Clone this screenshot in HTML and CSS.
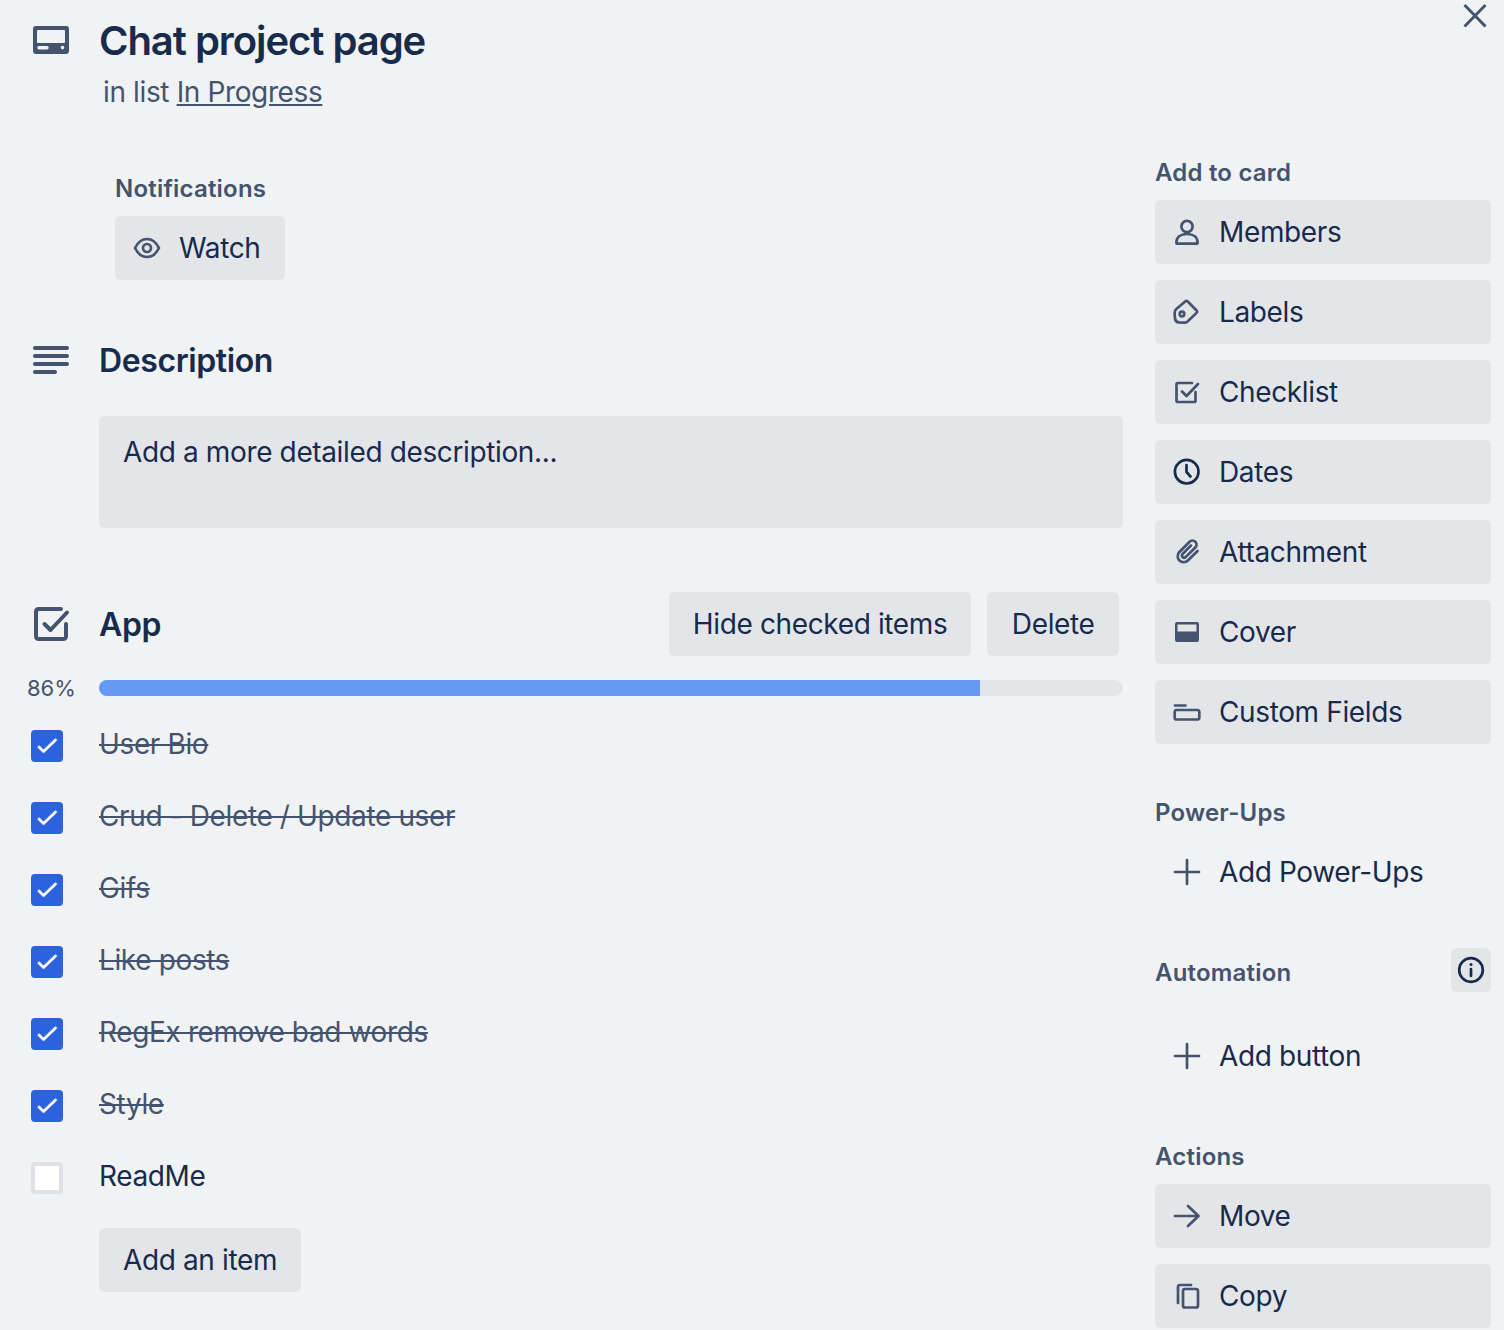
FILE: index.html
```html
<!DOCTYPE html>
<html lang="en">
<head>
    <meta charset="UTF-8">
    <meta name="viewport" content="width=device-width, initial-scale=1.0">
    <title>Chat project page</title>
    <link rel="stylesheet" href="styles.css">
</head>
<body>
    <div class="card-window">
        <svg class="close-icon" viewBox="0 0 32 32"><path d="M5.5 5 26.5 26.5M26.5 5 5.5 26.5"/></svg>

        <div class="card-main">
            <div class="card-head">
                <div class="gutter">
                    <svg class="cover-big" viewBox="0 0 36 28"><path fill-rule="evenodd" d="M3 0h30a3 3 0 0 1 3 3v22a3 3 0 0 1-3 3H3a3 3 0 0 1-3-3V3a3 3 0 0 1 3-3zM5 4a1 1 0 0 0-1 1v11a1 1 0 0 0 1 1h26a1 1 0 0 0 1-1V5a1 1 0 0 0-1-1zM6 20a1.7 1.7 0 0 0 0 3.4h8a1.7 1.7 0 0 0 0-3.4zM29.5 19.8a1.8 1.8 0 1 0 0 3.6 1.8 1.8 0 0 0 0-3.6z"/></svg>
                </div>
                <h1>Chat project page</h1>
            </div>
            <p class="in-list">in list <a href="#">In Progress</a></p>

            <div class="notifications">
                <h3 class="label">Notifications</h3>
                <button class="btn btn-icon">
                    <svg class="icon" viewBox="0 0 32 32"><path d="M4 16c2.5-5 7-9 12-9s9.5 4 12 9c-2.5 5-7 9-12 9s-9.5-4-12-9z"/><circle cx="16" cy="16" r="4"/></svg>
                    Watch
                </button>
            </div>

            <div class="section-head desc-head">
                <div class="gutter">
                    <svg class="lines-icon" viewBox="0 0 36 28"><rect width="36" height="4" rx="2"/><rect y="8" width="36" height="4" rx="2"/><rect y="16" width="36" height="4" rx="2"/><rect y="24" width="24" height="4" rx="2"/></svg>
                </div>
                <h2>Description</h2>
            </div>
            <div class="desc-box">Add a more detailed description...</div>

            <div class="section-head checklist-head">
                <div class="gutter">
                    <svg class="app-check" viewBox="0 0 36 34"><path d="M27 2H4.5A2.5 2.5 0 0 0 2 4.5v25A2.5 2.5 0 0 0 4.5 32h25a2.5 2.5 0 0 0 2.5-2.5V17M10.5 17l6 6L33 5.5"/></svg>
                </div>
                <h2>App</h2>
                <div class="head-actions">
                    <button class="btn">Hide checked items</button>
                    <button class="btn">Delete</button>
                </div>
            </div>

            <div class="progress-row">
                <span class="percent">86%</span>
                <div class="progress"><div class="progress-fill" style="width: 86%"></div></div>
            </div>

            <ul class="items">
                <li class="item done"><span class="box"><svg viewBox="0 0 32 32"><path d="M8 17l4.5 4.5L24.5 10"/></svg></span><span class="item-text">User Bio</span></li>
                <li class="item done"><span class="box"><svg viewBox="0 0 32 32"><path d="M8 17l4.5 4.5L24.5 10"/></svg></span><span class="item-text">Crud - Delete / Update user</span></li>
                <li class="item done"><span class="box"><svg viewBox="0 0 32 32"><path d="M8 17l4.5 4.5L24.5 10"/></svg></span><span class="item-text">Gifs</span></li>
                <li class="item done"><span class="box"><svg viewBox="0 0 32 32"><path d="M8 17l4.5 4.5L24.5 10"/></svg></span><span class="item-text">Like posts</span></li>
                <li class="item done"><span class="box"><svg viewBox="0 0 32 32"><path d="M8 17l4.5 4.5L24.5 10"/></svg></span><span class="item-text">RegEx remove bad words</span></li>
                <li class="item done"><span class="box"><svg viewBox="0 0 32 32"><path d="M8 17l4.5 4.5L24.5 10"/></svg></span><span class="item-text">Style</span></li>
                <li class="item"><span class="box"></span><span class="item-text">ReadMe</span></li>
            </ul>
            <button class="btn add-item">Add an item</button>
        </div>

        <aside class="card-side">
            <h3 class="label side-label">Add to card</h3>
            <div class="side-list">
                <button class="btn btn-icon side-btn">
                    <svg class="icon" viewBox="0 0 32 32"><circle cx="16" cy="10.5" r="5.6"/><path d="M5.4 26.4c0-5 4-8.4 10.6-8.4s10.6 3.4 10.6 8.4c0 .8-.5 1.3-1.3 1.3H6.700c-.8 0-1.300-.5-1.300-1.300z"/></svg>
                    Members
                </button>
                <button class="btn btn-icon side-btn">
                    <svg class="icon" viewBox="0 0 32 32"><path d="M14.5 5.2q1-.7 2 .1l9.300 9.500q.8.900 0 1.800L16 26q-1 .8-2.500.7L8 26.500q-3.500-.3-4-4L3.600 17q0-2.500 1.700-4z"/><circle cx="11" cy="18" r="2.300"/></svg>
                    Labels
                </button>
                <button class="btn btn-icon side-btn">
                    <svg class="icon" viewBox="0 0 32 32"><path d="M21 7H7a1.5 1.5 0 0 0-1.5 1.5v16A1.5 1.5 0 0 0 7 26h16a1.5 1.5 0 0 0 1.5-1.5V16M11 15.5l4.5 4.5L27 8"/></svg>
                    Checklist
                </button>
                <button class="btn btn-icon side-btn">
                    <svg class="icon icon-dark" viewBox="0 0 32 32"><circle cx="15.7" cy="15.7" r="11.8"/><path d="M15.5 9v7l4 4.5"/></svg>
                    Dates
                </button>
                <button class="btn btn-icon side-btn">
                    <svg class="icon" viewBox="0 0 32 32"><path d="M20 9.500 11.500 18a2.200 2.200 0 0 0 3.100 3.100l9.700-9.600a4 4 0 0 0-5.700-5.700L8.400 16a6 6 0 0 0 8.500 8.500L26.500 15"/></svg>
                    Attachment
                </button>
                <button class="btn btn-icon side-btn">
                    <svg class="icon icon-fill" viewBox="0 0 32 32"><path fill-rule="evenodd" d="M6 6h20a2 2 0 0 1 2 2v16a2 2 0 0 1-2 2H6a2 2 0 0 1-2-2V8a2 2 0 0 1 2-2zM7 8.5a.5.5 0 0 0-.5.5v6.500h19V9a.5.5 0 0 0-.5-.5z"/></svg>
                    Cover
                </button>
                <button class="btn btn-icon side-btn">
                    <svg class="icon" viewBox="0 0 32 32"><path d="M4 9.500h10.500"/><rect x="3.700" y="14" width="24.600" height="9.500" rx="2"/></svg>
                    Custom Fields
                </button>
            </div>

            <h3 class="label side-label side-gap">Power-Ups</h3>
            <button class="btn btn-icon side-btn btn-plain">
                <svg class="icon" viewBox="0 0 32 32"><path d="M16 4v24M4 16h24"/></svg>
                Add Power-Ups
            </button>

            <div class="automation-head">
                <h3 class="label">Automation</h3>
                <button class="info-btn">
                    <svg class="icon icon-dark" viewBox="0 0 32 32"><circle cx="16" cy="16" r="11.8"/><path d="M16 15v7"/><circle class="dot" cx="16" cy="10.5" r="1.5"/></svg>
                </button>
            </div>
            <button class="btn btn-icon side-btn btn-plain">
                <svg class="icon" viewBox="0 0 32 32"><path d="M16 4v24M4 16h24"/></svg>
                Add button
            </button>

            <h3 class="label side-label side-gap">Actions</h3>
            <div class="side-list">
                <button class="btn btn-icon side-btn">
                    <svg class="icon" viewBox="0 0 32 32"><path d="M4 16h23M17 6l10.500 10L17 26"/></svg>
                    Move
                </button>
                <button class="btn btn-icon side-btn">
                    <svg class="icon" viewBox="0 0 32 32"><path d="M7 23V7a2 2 0 0 1 2-2h11"/><rect x="12" y="9" width="15" height="18.500" rx="2"/></svg>
                    Copy
                </button>
            </div>
        </aside>
    </div>
</body>
</html>
```
FILE: styles.css
```css
* {
    box-sizing: border-box;
}
body {
    font-family: Inter, "Liberation Sans", sans-serif;
    font-size: 28px;
    line-height: 40px;
    letter-spacing: -0.37px;
    color: #172b4d;
    background-color: #f1f2f4;
    margin: 0;
    height: 1330px;
    overflow: hidden;
}
h1, h2, h3, p, ul {
    margin: 0;
    padding: 0;
}
svg {
    display: block;
}
.card-window {
    position: relative;
    display: flex;
    gap: 32px;
    padding-right: 13px;
}
.close-icon {
    position: absolute;
    top: 0;
    right: 13px;
    width: 32px;
    height: 32px;
    fill: none;
    stroke: #44546f;
    stroke-width: 3;
}
.card-main {
    width: 1123px;
    flex: none;
}
.card-side {
    width: 336px;
    flex: none;
    padding-top: 156px;
}
.gutter {
    width: 99px;
    padding-left: 33px;
    flex: none;
}

/* header */
.card-head {
    display: flex;
    align-items: center;
    padding-top: 16px;
}
.card-head h1 {
    font-size: 40px;
    line-height: 49px;
    font-weight: 600;
    letter-spacing: -1.05px;
}
.cover-big {
    width: 36px;
    height: 28px;
    fill: #44546f;
    margin-top: -1px;
}
.in-list {
    margin: 9px 0 0 103px;
    line-height: 36px;
    color: #44546f;
}
.in-list a {
    color: #44546f;
}

/* buttons */
.btn {
    display: block;
    height: 64px;
    padding: 0 24px;
    border: none;
    border-radius: 6px;
    font-family: inherit;
    font-size: 28px;
    letter-spacing: inherit;
    color: #172b4d;
    background-color: #e4e5e9;
    white-space: nowrap;
    cursor: pointer;
}
.btn-icon {
    display: flex;
    align-items: center;
    gap: 16px;
    padding: 0 16px;
}
.icon {
    width: 32px;
    height: 32px;
    flex: none;
    fill: none;
    stroke: #44546f;
    stroke-width: 2.7;
    stroke-linejoin: round;
    stroke-linecap: round;
}
.icon-dark {
    stroke: #172b4d;
}
.icon-fill {
    fill: #44546f;
    stroke: none;
}
.label {
    padding-top: 1px;
    font-size: 24px;
    line-height: 31px;
    font-weight: 600;
    letter-spacing: 0.2px;
    color: #44546f;
}

/* notifications */
.notifications {
    margin: 62px 0 0 115px;
}
.notifications .btn {
    margin-top: 12px;
    padding-right: 25px;
}

/* sections */
.section-head {
    display: flex;
    align-items: center;
}
.section-head h2 {
    padding-top: 1px;
    font-size: 32px;
    line-height: 39px;
    font-weight: 600;
    letter-spacing: -0.4px;
}
.desc-head {
    margin-top: 60px;
}
.lines-icon {
    width: 36px;
    height: 28px;
    fill: #44546f;
}
.desc-box {
    height: 112px;
    margin: 36px 0 0 99px;
    padding: 16px 24px 0;
    border-radius: 6px;
    background-color: #e4e5e9;
}
.checklist-head {
    margin-top: 64px;
    height: 64px;
}
.app-check {
    width: 36px;
    height: 34px;
    fill: none;
    stroke: #44546f;
    stroke-width: 4;
    stroke-linecap: round;
    stroke-linejoin: round;
    margin-left: 1px;
}
.head-actions {
    display: flex;
    gap: 16px;
    margin-left: auto;
    padding-right: 4px;
}
.head-actions .btn:last-child {
    padding: 0 24.5px;
}
.progress-row {
    display: flex;
    align-items: center;
    margin-top: 24px;
    height: 16px;
}
.percent {
    width: 99px;
    padding-left: 27px;
    flex: none;
    font-size: 22px;
    letter-spacing: 0;
    color: #44546f;
}
.progress {
    flex: 1;
    height: 16px;
    border-radius: 8px;
    overflow: hidden;
    background-color: #e4e5e9;
}
.progress-fill {
    height: 100%;
    background-color: #6699f5;
}

/* checklist items */
.items {
    list-style: none;
    margin-top: 12px;
}
.item {
    display: flex;
    height: 72px;
    padding-top: 16px;
}
.box {
    width: 32px;
    height: 32px;
    margin: 6px 36px 0 31px;
    flex: none;
    border-radius: 4px;
    background-color: #fff;
    border: 4px solid #dfe1e6;
}
.done .box {
    border: none;
    background-color: #2d62de;
}
.box svg {
    width: 32px;
    height: 32px;
    fill: none;
    stroke: #fff;
    stroke-width: 2.8;
    stroke-linecap: round;
    stroke-linejoin: round;
}
.done .item-text {
    color: #44546f;
    text-decoration: line-through;
}
.add-item {
    margin: 16px 0 0 99px;
}

/* sidebar */
.side-label {
    margin-bottom: 12px;
}
.side-gap {
    margin-top: 52px;
}
.side-list {
    display: flex;
    flex-direction: column;
    gap: 16px;
}
.side-btn {
    width: 100%;
}
.btn-plain {
    background: none;
}
.automation-head {
    display: flex;
    justify-content: space-between;
    align-items: flex-start;
    margin-top: 44px;
    margin-bottom: 32px;
}
.automation-head .label {
    padding-top: 9px;
}
.info-btn {
    width: 40px;
    height: 44px;
    padding: 6px 4px;
    border: none;
    border-radius: 6px;
    background-color: #e4e5e9;
}
.dot {
    fill: #172b4d;
    stroke: none;
}
```
